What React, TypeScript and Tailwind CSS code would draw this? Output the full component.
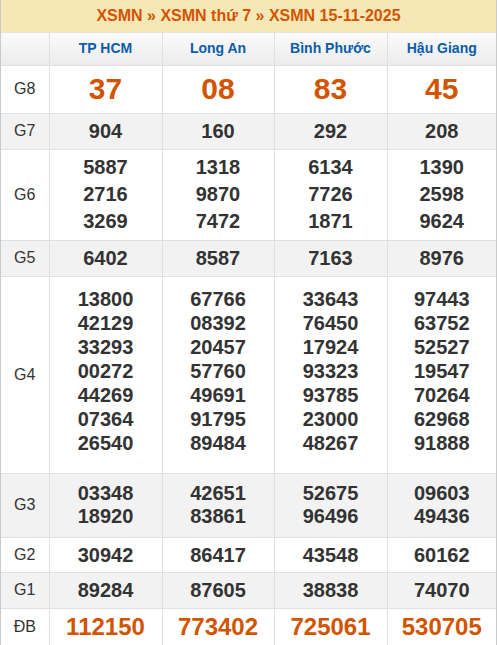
import React from 'react'

type Row = { label: string; h: string; lead: string; vals: string[][]; big?: 'g8' | 'db'; alt?: boolean; extra?: string }

const rows: Row[] = [
  { label: 'G8', h: 'h-[48px]', lead: 'leading-[34px]', big: 'g8', vals: [['37'], ['08'], ['83'], ['45']] },
  { label: 'G7', h: 'h-[36px]', lead: 'leading-[24px]', alt: true, vals: [['904'], ['160'], ['292'], ['208']] },
  {
    label: 'G6',
    h: 'h-[91px]',
    lead: 'leading-[27px]',
    vals: [
      ['5887', '2716', '3269'],
      ['1318', '9870', '7472'],
      ['6134', '7726', '1871'],
      ['1390', '2598', '9624'],
    ],
  },
  { label: 'G5', h: 'h-[36px]', lead: 'leading-[24px]', alt: true, vals: [['6402'], ['8587'], ['7163'], ['8976']] },
  {
    label: 'G4',
    h: 'h-[197px]',
    lead: 'leading-[24px]',
    extra: 'pb-[8px]',
    vals: [
      ['13800', '42129', '33293', '00272', '44269', '07364', '26540'],
      ['67766', '08392', '20457', '57760', '49691', '91795', '89484'],
      ['33643', '76450', '17924', '93323', '93785', '23000', '48267'],
      ['97443', '63752', '52527', '19547', '70264', '62968', '91888'],
    ],
  },
  {
    label: 'G3',
    h: 'h-[64px]',
    lead: 'leading-[23px]',
    alt: true,
    vals: [
      ['03348', '18920'],
      ['42651', '83861'],
      ['52675', '96496'],
      ['09603', '49436'],
    ],
  },
  { label: 'G2', h: 'h-[35px]', lead: 'leading-[24px]', vals: [['30942'], ['86417'], ['43548'], ['60162']] },
  { label: 'G1', h: 'h-[36px]', lead: 'leading-[24px]', alt: true, vals: [['89284'], ['87605'], ['38838'], ['74070']] },
  { label: 'ĐB', h: 'h-[37px]', lead: 'leading-[28px]', big: 'db', vals: [['112150'], ['773402'], ['725061'], ['530705']] },
]

const provinces = ['TP HCM', 'Long An', 'Bình Phước', 'Hậu Giang']

function numClass(big?: 'g8' | 'db') {
  if (big === 'g8') return 'text-[30px] text-[#d35400]'
  if (big === 'db') return 'text-[24px] text-[#d35400]'
  return 'text-[20px] text-[#333]'
}

export default function App() {
  return (
    <div className="w-[497px] h-[645px] bg-white" style={{ fontFamily: '"Liberation Sans", Arial, sans-serif' }}>
      <div className="w-[497px] border-l border-r border-b border-[#c9c9c9]">
        <div className="h-[33px] bg-[#f6e7b6] border-b border-[#e4e4e4] flex items-center justify-center text-[16px] font-bold text-[#d35400]">
          XSMN » XSMN thứ 7 » XSMN 15-11-2025
        </div>
        <table className="w-full table-fixed border-collapse">
          <colgroup>
            <col className="w-[48px]" />
            <col className="w-[113px]" />
            <col className="w-[112px]" />
            <col className="w-[113px]" />
            <col />
          </colgroup>
          <thead>
            <tr className="bg-gradient-to-b from-[#fbfbfb] to-[#ececec]">
              <th className="h-[32px] border-r border-b border-[#e0e0e0]" />
              {provinces.map((p, i) => (
                <th
                  key={p}
                  className={`h-[32px] border-b border-[#e0e0e0] text-[14px] font-bold text-[#0c5cab] ${i < 3 ? 'border-r' : ''}`}
                >
                  {p}
                </th>
              ))}
            </tr>
          </thead>
          <tbody>
            {rows.map((r) => (
              <tr key={r.label} className={r.alt ? 'bg-[#f2f2f2]' : 'bg-white'}>
                <td className={`${r.h} border-r border-b border-[#e0e0e0] text-center text-[16px] text-[#333] ${r.label === 'ĐB' ? 'border-b-0' : ''}`}>
                  {r.label}
                </td>
                {r.vals.map((v, i) => (
                  <td
                    key={i}
                    className={`${r.h} ${r.extra ?? ''} border-[#e0e0e0] text-center font-bold ${numClass(r.big)} ${r.lead} ${i < 3 ? 'border-r' : ''} ${r.label === 'ĐB' ? '' : 'border-b'}`}
                  >
                    {v.map((n) => (
                      <div key={n}>{n}</div>
                    ))}
                  </td>
                ))}
              </tr>
            ))}
          </tbody>
        </table>
      </div>
    </div>
  )
}
